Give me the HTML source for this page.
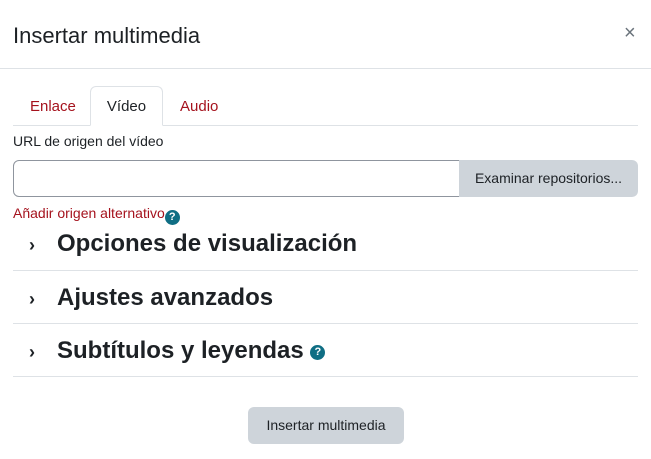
<!DOCTYPE html>
<html><head><meta charset="utf-8"><style>
*{margin:0;padding:0;box-sizing:border-box}
body{width:651px;height:459px;background:#fff;font-family:"Liberation Sans",sans-serif;color:#1d2125;position:relative;overflow:hidden}
.a{position:absolute}
.t{left:13px;top:21px;font-size:22px;line-height:30px}
.x{left:624px;top:22px;font-size:20px;color:#6a737b}
.hr{left:0;width:651px;top:68px;height:1px;background:#dee2e6}
.tabline{left:13px;width:625px;top:125px;height:1px;background:#dee2e6}
.tab{top:87px;height:40px;font-size:15px;line-height:40px;color:#a5121d}
.vt{left:90px;width:73px;top:86px;border:1px solid #dee2e6;border-bottom:1px solid #fff;border-radius:6px 6px 0 0;background:#fff;color:#1d2125;text-align:center}
.lab{left:13px;top:133px;font-size:14px}
.inp{left:13px;top:160px;width:447px;height:37px;border:1px solid #8f959e;border-radius:6px 0 0 6px}
.btn{left:459px;top:160px;width:179px;height:37px;background:#ced4da;border-radius:0 6px 6px 0;font-size:14px;line-height:37px;text-align:center}
.lnk{left:13px;top:205px;font-size:14px;color:#a5121d}
.q{display:inline-block;width:15px;height:15px;border-radius:50%;background:#0f6e84;color:#fff;font-size:11px;font-weight:bold;line-height:15px;text-align:center;vertical-align:-2px}
.h{left:29px;font-size:24px;font-weight:bold;line-height:30px}
.h span.c{display:inline-block;width:28px;font-size:18px;font-weight:bold}
.d{left:13px;width:625px;height:1px;background:#dee2e6}
.ib{left:248px;top:407px;width:156px;height:37px;background:#ced4da;border-radius:6px;font-size:14px;line-height:37px;text-align:center}
</style></head><body>
<div class="a t">Insertar multimedia</div>
<div class="a x">×</div>
<div class="a hr"></div>
<div class="a tabline"></div>
<div class="a tab" style="left:30px">Enlace</div>
<div class="a tab vt">Vídeo</div>
<div class="a tab" style="left:180px">Audio</div>
<div class="a lab">URL de origen del vídeo</div>
<div class="a inp"></div>
<div class="a btn">Examinar repositorios...</div>
<div class="a lnk">Añadir origen alternativo<span class="q">?</span></div>
<div class="a h" style="top:229px"><span class="c">›</span>Opciones de visualización</div>
<div class="a d" style="top:270px"></div>
<div class="a h" style="top:283px"><span class="c">›</span>Ajustes avanzados</div>
<div class="a d" style="top:323px"></div>
<div class="a h" style="top:336px"><span class="c">›</span>Subtítulos y leyendas <span class="q" style="vertical-align:3px">?</span></div>
<div class="a d" style="top:376px"></div>
<div class="a ib">Insertar multimedia</div>
</body></html>
